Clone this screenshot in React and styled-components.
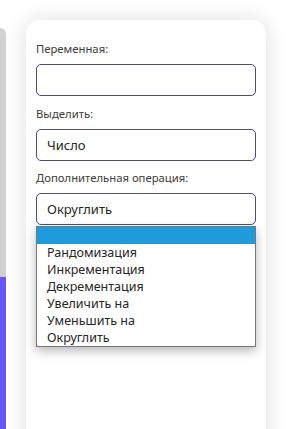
import React from "react";
import styled, { createGlobalStyle } from "styled-components";

const Global = createGlobalStyle`
  html, body { margin: 0; padding: 0; background: #ffffff; }
  body { font-family: "Noto Sans", "Open Sans", sans-serif; overflow: hidden; }
  * { box-sizing: border-box; }
`;

const Page = styled.div`
  display: flex;
  align-items: flex-start;
  height: 429px;
  overflow: hidden;
`;

const SideStrip = styled.div`
  width: 6px;
  margin-top: 28px;
  height: 401px;
  background: #d2d2d2;
  border-top-right-radius: 6px;
  display: flex;
  flex-direction: column;
  justify-content: flex-end;
`;

const SideAccent = styled.div`
  height: 152px;
  background: #6656fb;
`;

const Card = styled.div`
  margin-left: 20px;
  margin-top: 20px;
  width: 240px;
  height: 430px;
  background: #ffffff;
  border-radius: 14px 14px 0 0;
  box-shadow: 0 0 22px rgba(0, 0, 0, 0.13);
  padding: 22px 10px 0 10px;
  display: flex;
  flex-direction: column;
`;

const Field = styled.div`
  position: relative;
  display: flex;
  flex-direction: column;
  margin-bottom: 10.5px;
`;

const Label = styled.div`
  font-size: 11.3px;
  line-height: 14px;
  color: #3c3c3c;
  margin-bottom: 8px;
  white-space: nowrap;
`;

const Box = styled.div`
  height: 32px;
  border: 1px solid #4b4f7c;
  border-radius: 5px;
  padding: 0 10px;
  display: flex;
  align-items: center;
  font-size: 13px;
  color: #262626;
`;

const List = styled.div`
  position: absolute;
  left: 0;
  right: 0;
  top: 55px;
  background: #fff;
  border: 1px solid #767676;
  box-shadow: 0 4px 10px rgba(0, 0, 0, 0.28);
  z-index: 2;
  display: flex;
  flex-direction: column;
`;

const Option = styled.div`
  height: 17px;
  line-height: 17px;
  padding: 0 10px;
  font-size: 12.5px;
  color: #262626;
  background: ${(p) => (p.$active ? "#1f9bdb" : "transparent")};
`;

const options = [
  "",
  "Рандомизация",
  "Инкрементация",
  "Декрементация",
  "Увеличить на",
  "Уменьшить на",
  "Округлить",
];

export default function App() {
  return (
    <>
      <Global />
      <Page>
        <SideStrip>
          <SideAccent />
        </SideStrip>
        <Card>
          <Field>
            <Label>Переменная:</Label>
            <Box />
          </Field>
          <Field>
            <Label>Выделить:</Label>
            <Box>Число</Box>
          </Field>
          <Field>
            <Label>Дополнительная операция:</Label>
            <Box>Округлить</Box>
            <List>
              {options.map((o, i) => (
                <Option key={i} $active={i === 0}>
                  {o}
                </Option>
              ))}
            </List>
          </Field>
        </Card>
      </Page>
    </>
  );
}
